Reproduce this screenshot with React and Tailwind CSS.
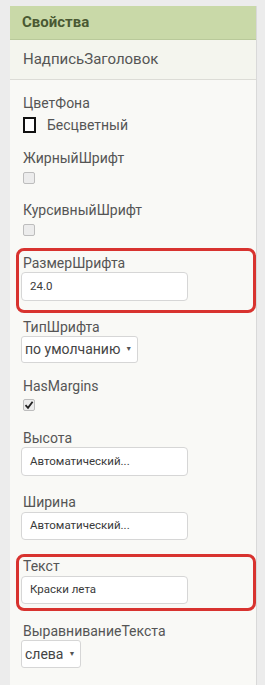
import React from "react";

const Label = ({ children, className = "" }) => (
  <div className={`h-4 leading-4 text-[14px] text-[#555] pl-[2px] ${className}`}>{children}</div>
);

const TextBox = ({ value, className = "" }) => (
  <div
    className={`w-[167px] bg-white border border-[#d6d6d6] rounded-[4px] flex items-center pl-[8px] text-[11.5px] text-[#3a3a3a] ${className}`}
  >
    {value}
  </div>
);

const Select = ({ value, className = "" }) => (
  <div
    className={`inline-flex items-center bg-white border border-[#d6d6d6] rounded-[3px] pl-[3px] pr-[5px] text-[14px] text-[#444] ${className}`}
  >
    <span>{value}</span>
    <span className="ml-[5px] text-[7px] text-[#555]">▼</span>
  </div>
);

const Check = ({ checked, className = "" }) => (
  <div
    className={`w-[12px] h-[12px] border border-[#bdbdbd] rounded-[2px] bg-[#ececec] flex items-center justify-center ${className}`}
  >
    {checked && (
      <svg width="10" height="10" viewBox="0 0 10 10">
        <path d="M1.5 5.2 L4 7.8 L8.6 1.8" stroke="#222" strokeWidth="1.8" fill="none" />
      </svg>
    )}
  </div>
);

export default function App() {
  return (
    <div
      className="w-[265px] h-[685px] bg-[#ececec] pt-[6px] pl-[10px] overflow-hidden"
      style={{ fontFamily: "Roboto, 'Liberation Sans', sans-serif" }}
    >
      <div className="w-[247px] h-[679px] bg-[#f9f9f6] border-r border-[#d9d9d9]">
        <div className="h-[34px] bg-[#c9d9a8] flex items-center pl-[12px] text-[15px] font-bold text-[#4a5933] border-b border-[#b9c99a]">
          Свойства
        </div>
        <div className="h-[40px] bg-[#f4f5ee] border-b border-[#dcdcd6] flex items-center pl-[13px] text-[15px] text-[#555]">
          НадписьЗаголовок
        </div>

        <div className="pl-[11px]">
          <Label className="mt-[15px]">ЦветФона</Label>
          <div className="mt-[6px] h-4 flex items-center pl-[2px]">
            <div className="w-[13px] h-[16px] border-2 border-[#111] bg-white" />
            <span className="ml-[11px] text-[14px] text-[#555]">Бесцветный</span>
          </div>

          <Label className="mt-[17px]">ЖирныйШрифт</Label>
          <Check className="mt-[6px] ml-[2px]" />

          <Label className="mt-[18px]">КурсивныйШрифт</Label>
          <Check className="mt-[6px] ml-[2px]" />

          <div className="mt-[12px] -ml-[5px] w-[240px] border-[3px] border-[#d8332f] rounded-[8px] pt-[4px] pb-[9px] pl-[2px]">
            <Label className="pl-[2px]">РазмерШрифта</Label>
            <TextBox value="24.0" className="mt-[1px] h-[29px]" />
          </div>

          <Label className="mt-[6px]">ТипШрифта</Label>
          <Select value="по умолчанию" className="mt-[1px] h-[27px]" />

          <Label className="mt-[15px]">HasMargins</Label>
          <Check checked className="mt-[5px] ml-[2px]" />

          <Label className="mt-[19px]">Высота</Label>
          <TextBox value="Автоматический..." className="mt-[1px] h-[29px]" />

          <Label className="mt-[18px]">Ширина</Label>
          <TextBox value="Автоматический..." className="mt-[2px] h-[28px]" />

          <div className="mt-[14px] -ml-[5px] w-[240px] border-[3px] border-[#d8332f] rounded-[8px] pt-[1px] pb-[4px] pl-[2px]">
            <Label className="pl-[2px]">Текст</Label>
            <TextBox value="Краски лета" className="mt-[2px] h-[28px]" />
          </div>

          <Label className="mt-[12px]">ВыравниваниеТекста</Label>
          <Select value="слева" className="mt-[1px] h-[28px]" />
        </div>
      </div>
    </div>
  );
}
